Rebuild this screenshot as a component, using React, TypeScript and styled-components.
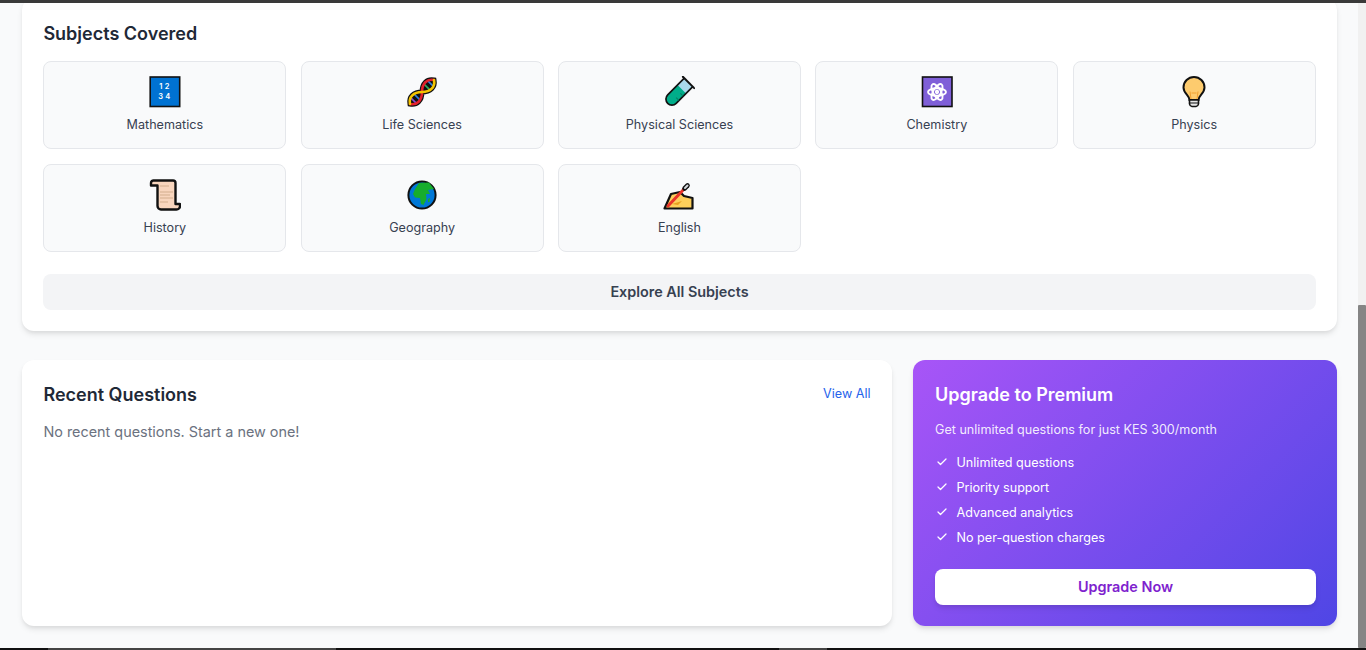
import React from "react";
import styled, { createGlobalStyle } from "styled-components";
import { Check } from "lucide-react";

const Global = createGlobalStyle`
  html, body { margin: 0; padding: 0; height: 100%; overflow: hidden; }
  body { font-family: Inter, "Liberation Sans", sans-serif; background: #f9fafb; color: #1f2937; }
  * { box-sizing: border-box; }
`;

const Frame = styled.div`
  height: 650px;
  display: flex;
  flex-direction: column;
`;

const TopBar = styled.div`
  height: 3px;
  background: #3a3a3a;
  flex: none;
`;

const BottomBar = styled.div`
  height: 2px;
  background: #111;
  flex: none;
  display: flex;
  padding-left: 48px;
  gap: 443px;
`;

const BarChip = styled.span<{ $w: number }>`
  width: ${(p) => p.$w}px;
  background: #444;
`;

const Viewport = styled.div`
  flex: 1;
  min-height: 0;
  display: flex;
`;

const Content = styled.main`
  flex: 1;
  min-width: 0;
  overflow: hidden;
  padding: 0 21px 0 22px;
  background: #f9fafb;
`;

const Track = styled.div`
  width: 8px;
  flex: none;
  background: #f1f1f1;
  padding-top: 302px;
`;

const Thumb = styled.div`
  height: 343px;
  background: #858585;
  border-radius: 1px;
`;

const Card = styled.section`
  background: #fff;
  border-radius: 12px;
  padding: 21px 21.4px;
  box-shadow: 0 4px 6px -1px rgba(0, 0, 0, 0.1), 0 2px 4px -1px rgba(0, 0, 0, 0.06);
`;

const SubjectsCard = styled(Card)`
  margin-top: -5px;
`;

const Title = styled.h2`
  margin: 0;
  font-size: 18px;
  line-height: 27px;
  font-weight: 600;
  color: #1f2937;
`;

const SubjectsTitle = styled(Title)`
  padding-top: 1px;
`;

const SubjectGrid = styled.div`
  margin-top: 13.5px;
  display: grid;
  grid-template-columns: repeat(5, 1fr);
  gap: 15px 14.4px;
`;

const Subject = styled.div`
  height: 88px;
  padding-top: 14.4px;
  background: #f9fafb;
  border: 1px solid #e5e7eb;
  border-radius: 8px;
  display: flex;
  flex-direction: column;
  align-items: center;
`;

const SubjectIcon = styled.svg`
  width: 32px;
  height: 32px;
  display: block;
  flex: none;
`;

const SubjectName = styled.span`
  margin-top: 7px;
  font-size: 12.6px;
  line-height: 19px;
  color: #374151;
`;

const ExploreButton = styled.button`
  display: block;
  width: 100%;
  height: 36px;
  margin-top: 22px;
  border: 0;
  border-radius: 8px;
  background: #f3f4f6;
  color: #374151;
  font: 600 14.4px Inter, "Liberation Sans", sans-serif;
`;

const Columns = styled.div`
  margin-top: 29px;
  display: grid;
  grid-template-columns: 1fr 424px;
  gap: 21px;
  height: 266px;
`;

const RecentHead = styled.div`
  display: flex;
  justify-content: space-between;
  align-items: flex-start;
`;

const ViewAll = styled.a`
  font-size: 12.6px;
  line-height: 26px;
  color: #2563eb;
`;

const Empty = styled.p`
  margin: 13px 0 0;
  font-size: 14.4px;
  line-height: 21px;
  color: #6b7280;
`;

const PremiumCard = styled(Card)`
  padding: 21px 21px 21px 22px;
  background: linear-gradient(135deg, #a855f7, #4f46e5);
  color: #fff;
`;

const PremiumTitle = styled(Title)`
  color: #fff;
`;

const PremiumSub = styled.p`
  margin: 12px 0 0;
  font-size: 12.6px;
  line-height: 19px;
  color: rgba(255, 255, 255, 0.9);
`;

const Perks = styled.ul`
  margin: 14px 0 0;
  padding: 0;
  list-style: none;
  display: flex;
  flex-direction: column;
  gap: 6px;
`;

const Perk = styled.li`
  display: flex;
  align-items: center;
  gap: 8.5px;
  height: 19px;
  font-size: 12.6px;
  padding-left: 1px;
`;

const UpgradeButton = styled.button`
  display: block;
  width: 100%;
  height: 36px;
  margin-top: 22px;
  border: 0;
  border-radius: 8px;
  background: #fff;
  color: #7e22ce;
  font: 600 14.4px Inter, "Liberation Sans", sans-serif;
  box-shadow: 0 4px 6px -1px rgba(0, 0, 0, 0.1), 0 2px 4px -1px rgba(0, 0, 0, 0.06);
`;

const MathIcon = () => (
  <SubjectIcon viewBox="0 0 32 32">
    <rect x="1.2" y="1" width="29.5" height="29.5" fill="#0072d2" stroke="#111" strokeWidth="1.6" />
    <text x="16.5" y="13" fill="#fff" fontSize="7.5" fontWeight="600" textAnchor="middle" fontFamily="Inter, sans-serif" letterSpacing="2.4">12</text>
    <text x="16.5" y="23" fill="#fff" fontSize="7.5" fontWeight="600" textAnchor="middle" fontFamily="Inter, sans-serif" letterSpacing="2.4">34</text>
  </SubjectIcon>
);

const strandA = "M-1 16 C3 10 10 10 16 16 S29 22 33 16";
const strandB = "M-1 16 C3 22 10 22 16 16 S29 10 33 16";

const DnaIcon = () => (
  <SubjectIcon viewBox="0 0 32 32">
    <g fill="none" strokeLinecap="round" transform="rotate(-45 16 16)">
      <path d="M-1 16 C3 10 10 10 16 16 C10 22 3 22 -1 16 Z M16 16 C22 10 29 10 33 16 C29 22 22 22 16 16 Z" fill="#111" stroke="#111" strokeWidth="5" />
      <path d="M4 13 V19" stroke="#8a4fd0" strokeWidth="1.6" />
      <path d="M9 13 V19" stroke="#2f7fe0" strokeWidth="1.6" />
      <path d="M23 13 V19" stroke="#2eae5f" strokeWidth="1.6" />
      <path d="M28 13 V19" stroke="#2f7fe0" strokeWidth="1.6" />
      <path d={strandB} stroke="#e3202c" strokeWidth="2.6" />
      <path d={strandA} stroke="#f5c400" strokeWidth="2.6" />
    </g>
  </SubjectIcon>
);

const TubeIcon = () => (
  <SubjectIcon viewBox="0 0 32 32">
    <g transform="rotate(45 16 16)">
      <path d="M10 2.5 H22 V26 a6 6 0 0 1 -12 0 Z" fill="#a9d9ec" />
      <path d="M10 12 H22 V26 a6 6 0 0 1 -12 0 Z" fill="#00ad8a" />
      <path d="M10 2.5 V26 a6 6 0 0 0 12 0 V2.5" fill="none" stroke="#111" strokeWidth="1.7" />
      <path d="M8 2.5 H24" stroke="#111" strokeWidth="2" strokeLinecap="round" />
      <path d="M18 16 H22 M18 22 H22" stroke="#067a62" strokeWidth="1" />
    </g>
  </SubjectIcon>
);

const AtomIcon = () => (
  <SubjectIcon viewBox="0 0 32 32">
    <rect x="1.5" y="1" width="29.5" height="29.5" fill="#7f5fd8" stroke="#111" strokeWidth="1.6" />
    <g fill="none" stroke="#fff" strokeWidth="1.9">
      <ellipse cx="16" cy="16" rx="9" ry="3.8" />
      <ellipse cx="16" cy="16" rx="9" ry="3.8" transform="rotate(60 16 16)" />
      <ellipse cx="16" cy="16" rx="9" ry="3.8" transform="rotate(120 16 16)" />
      <circle cx="16" cy="16" r="1.2" />
    </g>
  </SubjectIcon>
);

const BulbIcon = () => (
  <SubjectIcon viewBox="0 0 32 32">
    <path d="M11.5 24 C11.5 19.5 5.5 17.5 5.5 11.5 A10.5 10.5 0 0 1 26.5 11.5 C26.5 17.5 20.5 19.5 20.5 24 Z" fill="#fdcb6e" stroke="#111" strokeWidth="2" />
    <path d="M13 23 L12 15.5 M19 23 L20 15.5 M13.5 17 H18.5" fill="none" stroke="#f0a030" strokeWidth="1" />
    <path d="M11.5 24 H20.5 V28 A3 3 0 0 1 18 30.5 H14 A3 3 0 0 1 11.5 28 Z" fill="#e6e6e6" stroke="#111" strokeWidth="1.6" />
    <path d="M12 27 H20" stroke="#111" strokeWidth="1" />
  </SubjectIcon>
);

const ScrollIcon = () => (
  <SubjectIcon viewBox="0 0 32 32">
    <path d="M5 1.5 H24 A2.5 2.5 0 0 1 26.5 4 V25 H31 V27 A3.5 3.5 0 0 1 27.5 30.5 H12 A3.5 3.5 0 0 1 8.5 27 V6.5 H2 V4 A2.5 2.5 0 0 1 5 1.5 Z" fill="#f8d5bd" stroke="#111" strokeWidth="2.4" strokeLinejoin="round" />
    <path d="M11 7 H20 M11 13 H24 M11 16 H21 M11 19 H24 M11 23 H19" stroke="#d1ad8e" strokeWidth="1.2" />
  </SubjectIcon>
);

const GlobeIcon = () => (
  <SubjectIcon viewBox="0 0 32 32">
    <circle cx="16" cy="16" r="13.6" fill="#0078d7" stroke="#111" strokeWidth="2" />
    <path d="M11 7 L13 4 L23 3.5 L28 10 L22 11 L24 15 L20 15 L20.5 20 L17.5 26 L15 25 L14 19 L9 18.5 L7 15 L9 10 Z" fill="#17ad2d" />
    <path d="M22 20 L24 19 L23.5 23 L22 23 Z" fill="#17ad2d" />
  </SubjectIcon>
);

const WriteIcon = () => (
  <SubjectIcon viewBox="0 0 32 32">
    <path d="M1.5 29.5 L8 15 L17 13 L21 17 L29.5 19 V29.5 Z" fill="#fdcf5b" stroke="#111" strokeWidth="2.2" strokeLinejoin="round" />
    <path d="M9 25 L19 22 L15 26 Z" fill="#e8a020" />
    <path d="M5 27 L22 9" stroke="#e8342a" strokeWidth="3" strokeLinecap="round" />
    <path d="M21.5 9.5 L24.5 6.5" stroke="#111" strokeWidth="4.6" strokeLinecap="round" />
    <path d="M22 9 L24.5 6.5" stroke="#d5d8dc" strokeWidth="2" strokeLinecap="round" />
  </SubjectIcon>
);

const subjects = [
  { name: "Mathematics", Icon: MathIcon },
  { name: "Life Sciences", Icon: DnaIcon },
  { name: "Physical Sciences", Icon: TubeIcon },
  { name: "Chemistry", Icon: AtomIcon },
  { name: "Physics", Icon: BulbIcon },
  { name: "History", Icon: ScrollIcon },
  { name: "Geography", Icon: GlobeIcon },
  { name: "English", Icon: WriteIcon },
];

const perks = ["Unlimited questions", "Priority support", "Advanced analytics", "No per-question charges"];

export default function App() {
  return (
    <Frame>
      <Global />
      <TopBar />
      <Viewport>
        <Content>
          <SubjectsCard>
            <SubjectsTitle>Subjects Covered</SubjectsTitle>
            <SubjectGrid>
              {subjects.map(({ name, Icon }) => (
                <Subject key={name}>
                  <Icon />
                  <SubjectName>{name}</SubjectName>
                </Subject>
              ))}
            </SubjectGrid>
            <ExploreButton>Explore All Subjects</ExploreButton>
          </SubjectsCard>
          <Columns>
            <Card>
              <RecentHead>
                <Title>Recent Questions</Title>
                <ViewAll>View All</ViewAll>
              </RecentHead>
              <Empty>No recent questions. Start a new one!</Empty>
            </Card>
            <PremiumCard>
              <PremiumTitle>Upgrade to Premium</PremiumTitle>
              <PremiumSub>Get unlimited questions for just KES 300/month</PremiumSub>
              <Perks>
                {perks.map((perk) => (
                  <Perk key={perk}>
                    <Check size={12} strokeWidth={2.5} />
                    {perk}
                  </Perk>
                ))}
              </Perks>
              <UpgradeButton>Upgrade Now</UpgradeButton>
            </PremiumCard>
          </Columns>
        </Content>
        <Track>
          <Thumb />
        </Track>
      </Viewport>
      <BottomBar>
        <BarChip $w={288} />
        <BarChip $w={48} />
      </BottomBar>
    </Frame>
  );
}
